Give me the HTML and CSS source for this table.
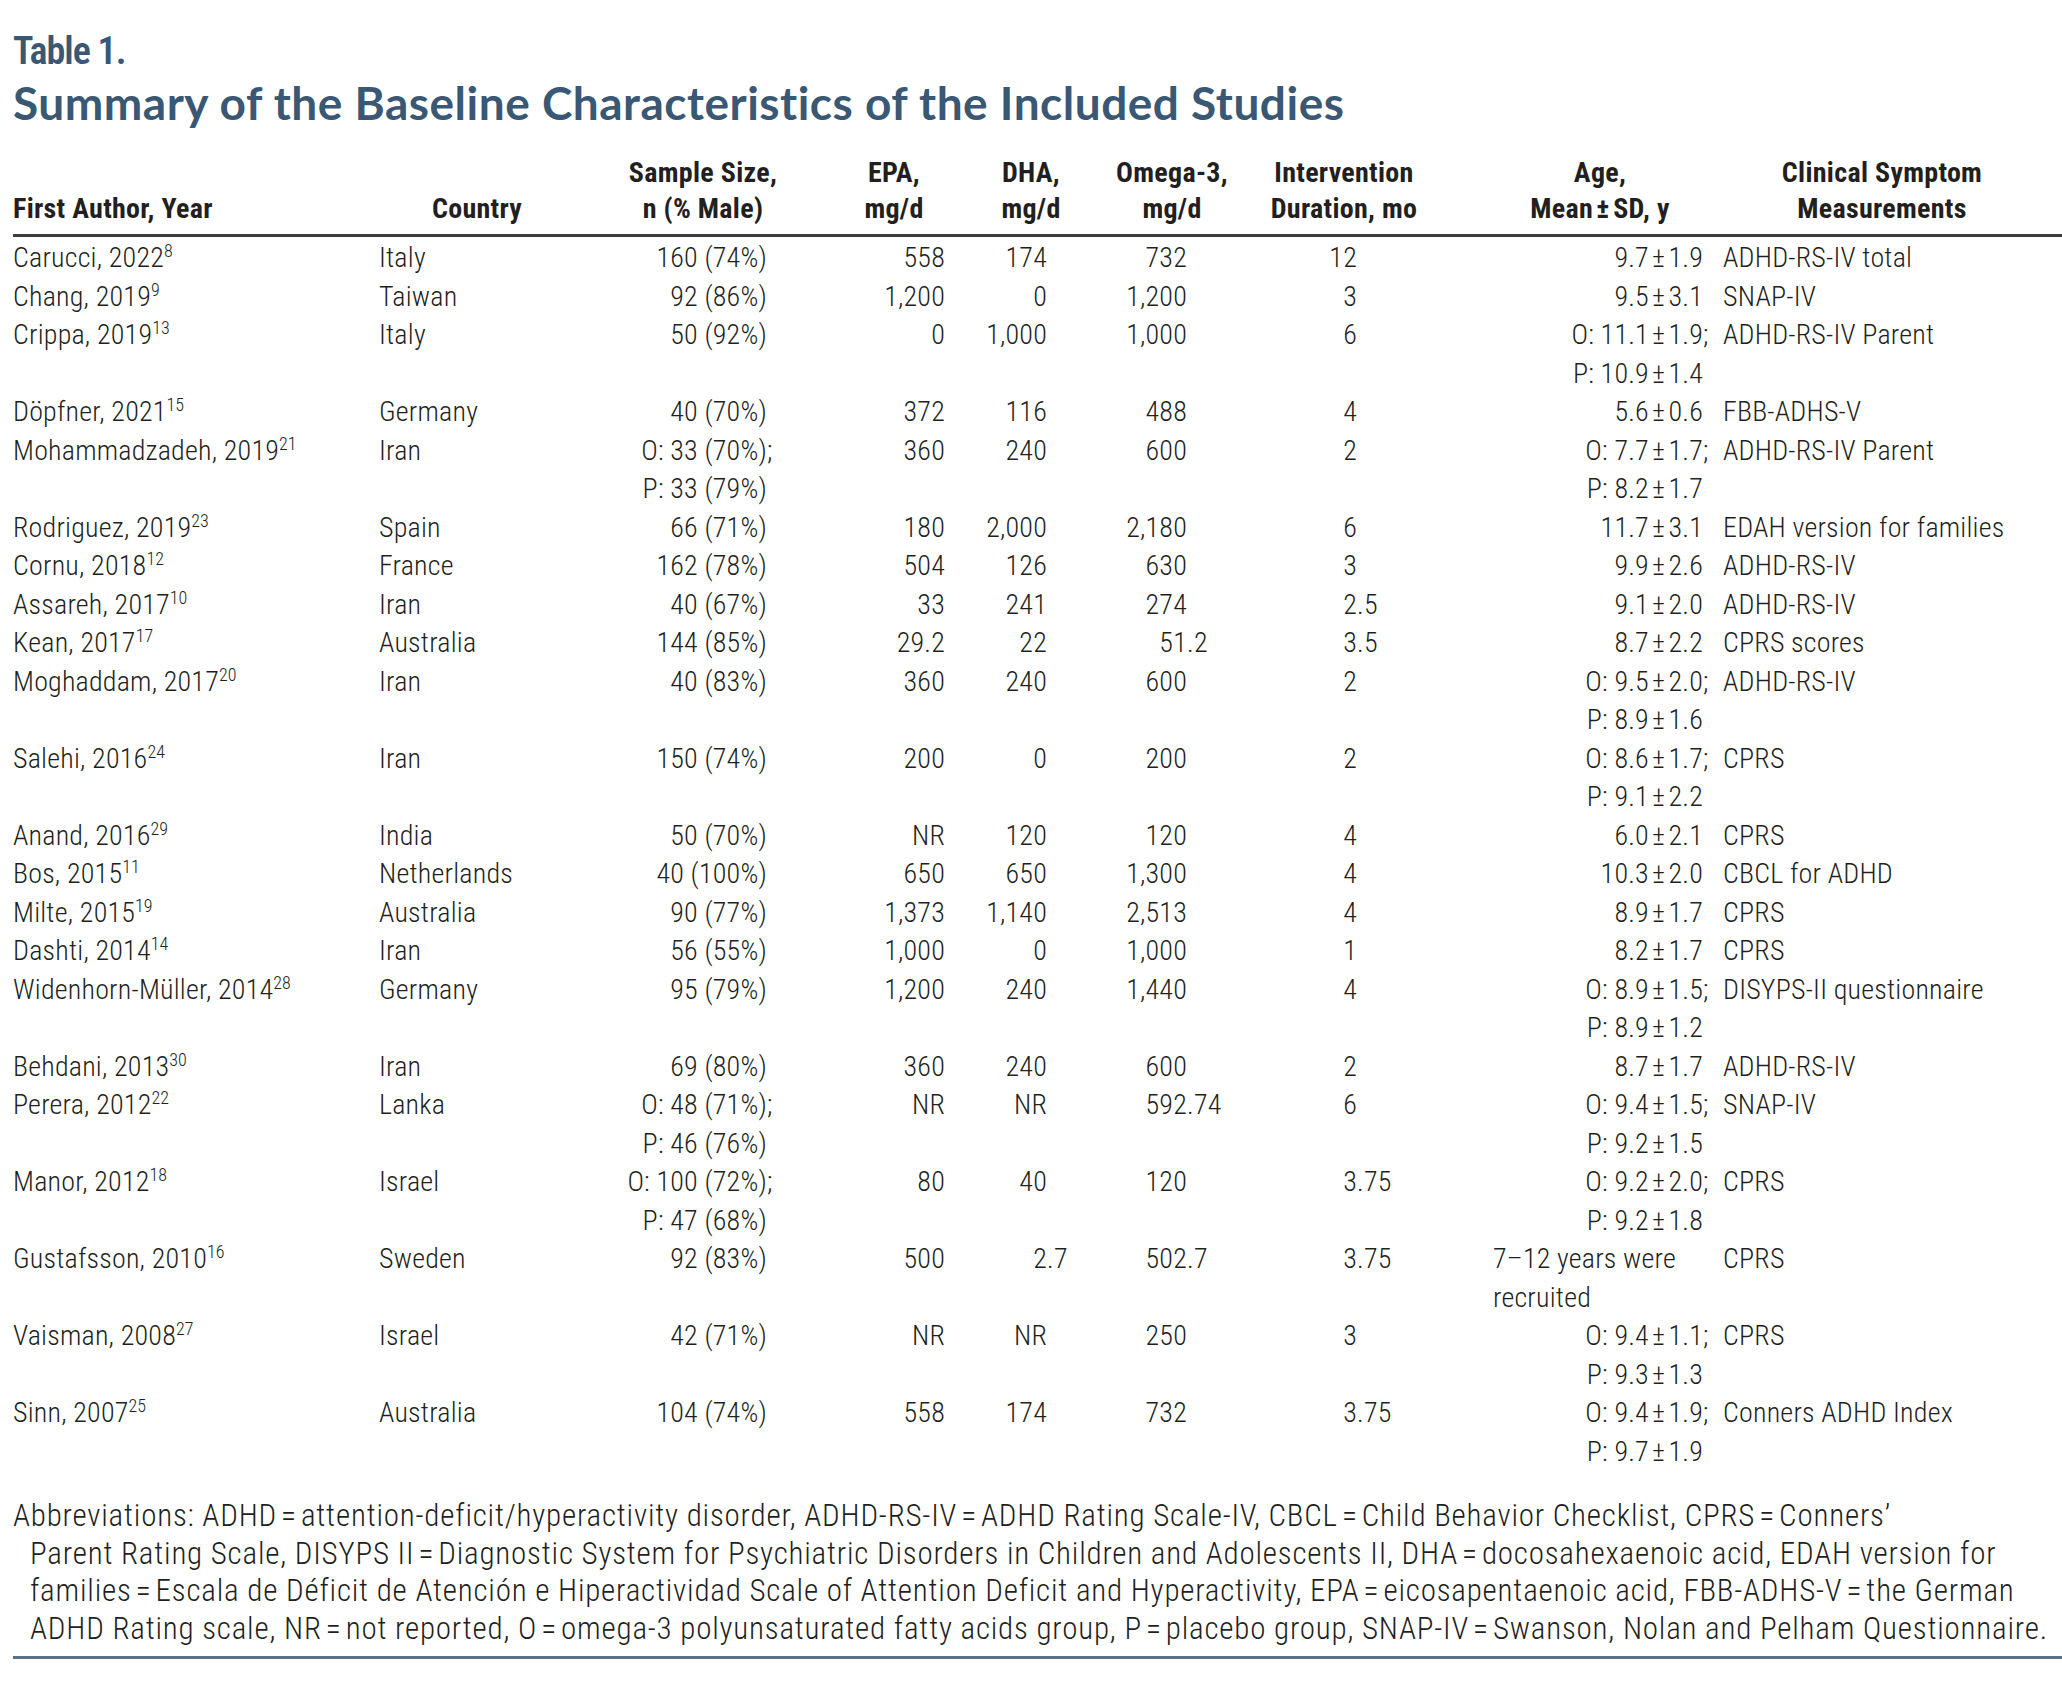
FILE: index.html
```html
<!DOCTYPE html>
<html lang="en">
<head>
<meta charset="utf-8">
<title>Table 1. Summary of the Baseline Characteristics of the Included Studies</title>
<link rel="stylesheet" href="styles.css">
</head>
<body>
<div class="page">
  <div class="label">Table 1.</div>
  <h1 class="title">Summary of the Baseline Characteristics of the Included Studies</h1>
  <table class="tbl">
    <colgroup>
      <col class="w1"><col class="w2"><col class="w3"><col class="w4"><col class="w5"><col class="w6"><col class="w7"><col class="w8"><col class="w9">
    </colgroup>
    <thead>
      <tr>
        <th class="h1">First Author, Year</th>
        <th class="h2">Country</th>
        <th class="h3">Sample Size,<br>n (% Male)</th>
        <th class="h4">EPA,<br>mg/d</th>
        <th class="h5">DHA,<br>mg/d</th>
        <th class="h6">Omega-3,<br>mg/d</th>
        <th class="h7">Intervention<br>Duration, mo</th>
        <th class="h8">Age,<br>Mean&#8202;±&#8202;SD, y</th>
        <th class="h9">Clinical Symptom<br>Measurements</th>
      </tr>
    </thead>
    <tbody>
      <tr><td class="c1">Carucci, 2022<sup>8</sup></td><td class="c2">Italy</td><td class="c3">160 (74%)</td><td class="c4">558</td><td class="c5">174</td><td class="c6">732</td><td class="c7">12</td><td class="c8">9.7&#8202;±&#8202;1.9</td><td class="c9">ADHD-RS-IV total</td></tr>
      <tr><td class="c1">Chang, 2019<sup>9</sup></td><td class="c2">Taiwan</td><td class="c3">92 (86%)</td><td class="c4">1,200</td><td class="c5">0</td><td class="c6">1,200</td><td class="c7">3</td><td class="c8">9.5&#8202;±&#8202;3.1</td><td class="c9">SNAP-IV</td></tr>
      <tr><td class="c1">Crippa, 2019<sup>13</sup></td><td class="c2">Italy</td><td class="c3">50 (92%)</td><td class="c4">0</td><td class="c5">1,000</td><td class="c6">1,000</td><td class="c7">6</td><td class="c8">O: 11.1&#8202;±&#8202;1.9<span class="hang">;</span><br>P: 10.9&#8202;±&#8202;1.4</td><td class="c9">ADHD-RS-IV Parent</td></tr>
      <tr><td class="c1">Döpfner, 2021<sup>15</sup></td><td class="c2">Germany</td><td class="c3">40 (70%)</td><td class="c4">372</td><td class="c5">116</td><td class="c6">488</td><td class="c7">4</td><td class="c8">5.6&#8202;±&#8202;0.6</td><td class="c9">FBB-ADHS-V</td></tr>
      <tr><td class="c1">Mohammadzadeh, 2019<sup>21</sup></td><td class="c2">Iran</td><td class="c3">O: 33 (70%)<span class="hang">;</span><br>P: 33 (79%)</td><td class="c4">360</td><td class="c5">240</td><td class="c6">600</td><td class="c7">2</td><td class="c8">O: 7.7&#8202;±&#8202;1.7<span class="hang">;</span><br>P: 8.2&#8202;±&#8202;1.7</td><td class="c9">ADHD-RS-IV Parent</td></tr>
      <tr><td class="c1">Rodriguez, 2019<sup>23</sup></td><td class="c2">Spain</td><td class="c3">66 (71%)</td><td class="c4">180</td><td class="c5">2,000</td><td class="c6">2,180</td><td class="c7">6</td><td class="c8">11.7&#8202;±&#8202;3.1</td><td class="c9">EDAH version for families</td></tr>
      <tr><td class="c1">Cornu, 2018<sup>12</sup></td><td class="c2">France</td><td class="c3">162 (78%)</td><td class="c4">504</td><td class="c5">126</td><td class="c6">630</td><td class="c7">3</td><td class="c8">9.9&#8202;±&#8202;2.6</td><td class="c9">ADHD-RS-IV</td></tr>
      <tr><td class="c1">Assareh, 2017<sup>10</sup></td><td class="c2">Iran</td><td class="c3">40 (67%)</td><td class="c4">33</td><td class="c5">241</td><td class="c6">274</td><td class="c7">2<span class="hang">.5</span></td><td class="c8">9.1&#8202;±&#8202;2.0</td><td class="c9">ADHD-RS-IV</td></tr>
      <tr><td class="c1">Kean, 2017<sup>17</sup></td><td class="c2">Australia</td><td class="c3">144 (85%)</td><td class="c4">29.2</td><td class="c5">22</td><td class="c6">51<span class="hang">.2</span></td><td class="c7">3<span class="hang">.5</span></td><td class="c8">8.7&#8202;±&#8202;2.2</td><td class="c9">CPRS scores</td></tr>
      <tr><td class="c1">Moghaddam, 2017<sup>20</sup></td><td class="c2">Iran</td><td class="c3">40 (83%)</td><td class="c4">360</td><td class="c5">240</td><td class="c6">600</td><td class="c7">2</td><td class="c8">O: 9.5&#8202;±&#8202;2.0<span class="hang">;</span><br>P: 8.9&#8202;±&#8202;1.6</td><td class="c9">ADHD-RS-IV</td></tr>
      <tr><td class="c1">Salehi, 2016<sup>24</sup></td><td class="c2">Iran</td><td class="c3">150 (74%)</td><td class="c4">200</td><td class="c5">0</td><td class="c6">200</td><td class="c7">2</td><td class="c8">O: 8.6&#8202;±&#8202;1.7<span class="hang">;</span><br>P: 9.1&#8202;±&#8202;2.2</td><td class="c9">CPRS</td></tr>
      <tr><td class="c1">Anand, 2016<sup>29</sup></td><td class="c2">India</td><td class="c3">50 (70%)</td><td class="c4">NR</td><td class="c5">120</td><td class="c6">120</td><td class="c7">4</td><td class="c8">6.0&#8202;±&#8202;2.1</td><td class="c9">CPRS</td></tr>
      <tr><td class="c1">Bos, 2015<sup>11</sup></td><td class="c2">Netherlands</td><td class="c3">40 (100%)</td><td class="c4">650</td><td class="c5">650</td><td class="c6">1,300</td><td class="c7">4</td><td class="c8">10.3&#8202;±&#8202;2.0</td><td class="c9">CBCL for ADHD</td></tr>
      <tr><td class="c1">Milte, 2015<sup>19</sup></td><td class="c2">Australia</td><td class="c3">90 (77%)</td><td class="c4">1,373</td><td class="c5">1,140</td><td class="c6">2,513</td><td class="c7">4</td><td class="c8">8.9&#8202;±&#8202;1.7</td><td class="c9">CPRS</td></tr>
      <tr><td class="c1">Dashti, 2014<sup>14</sup></td><td class="c2">Iran</td><td class="c3">56 (55%)</td><td class="c4">1,000</td><td class="c5">0</td><td class="c6">1,000</td><td class="c7">1</td><td class="c8">8.2&#8202;±&#8202;1.7</td><td class="c9">CPRS</td></tr>
      <tr><td class="c1">Widenhorn-Müller, 2014<sup>28</sup></td><td class="c2">Germany</td><td class="c3">95 (79%)</td><td class="c4">1,200</td><td class="c5">240</td><td class="c6">1,440</td><td class="c7">4</td><td class="c8">O: 8.9&#8202;±&#8202;1.5<span class="hang">;</span><br>P: 8.9&#8202;±&#8202;1.2</td><td class="c9">DISYPS-II questionnaire</td></tr>
      <tr><td class="c1">Behdani, 2013<sup>30</sup></td><td class="c2">Iran</td><td class="c3">69 (80%)</td><td class="c4">360</td><td class="c5">240</td><td class="c6">600</td><td class="c7">2</td><td class="c8">8.7&#8202;±&#8202;1.7</td><td class="c9">ADHD-RS-IV</td></tr>
      <tr><td class="c1">Perera, 2012<sup>22</sup></td><td class="c2">Lanka</td><td class="c3">O: 48 (71%)<span class="hang">;</span><br>P: 46 (76%)</td><td class="c4">NR</td><td class="c5">NR</td><td class="c6">592<span class="hang">.74</span></td><td class="c7">6</td><td class="c8">O: 9.4&#8202;±&#8202;1.5<span class="hang">;</span><br>P: 9.2&#8202;±&#8202;1.5</td><td class="c9">SNAP-IV</td></tr>
      <tr><td class="c1">Manor, 2012<sup>18</sup></td><td class="c2">Israel</td><td class="c3">O: 100 (72%)<span class="hang">;</span><br>P: 47 (68%)</td><td class="c4">80</td><td class="c5">40</td><td class="c6">120</td><td class="c7">3<span class="hang">.75</span></td><td class="c8">O: 9.2&#8202;±&#8202;2.0<span class="hang">;</span><br>P: 9.2&#8202;±&#8202;1.8</td><td class="c9">CPRS</td></tr>
      <tr><td class="c1">Gustafsson, 2010<sup>16</sup></td><td class="c2">Sweden</td><td class="c3">92 (83%)</td><td class="c4">500</td><td class="c5">2<span class="hang">.7</span></td><td class="c6">502<span class="hang">.7</span></td><td class="c7">3<span class="hang">.75</span></td><td class="c8 left">7–12 years were<br>recruited</td><td class="c9">CPRS</td></tr>
      <tr><td class="c1">Vaisman, 2008<sup>27</sup></td><td class="c2">Israel</td><td class="c3">42 (71%)</td><td class="c4">NR</td><td class="c5">NR</td><td class="c6">250</td><td class="c7">3</td><td class="c8">O: 9.4&#8202;±&#8202;1.1<span class="hang">;</span><br>P: 9.3&#8202;±&#8202;1.3</td><td class="c9">CPRS</td></tr>
      <tr><td class="c1">Sinn, 2007<sup>25</sup></td><td class="c2">Australia</td><td class="c3">104 (74%)</td><td class="c4">558</td><td class="c5">174</td><td class="c6">732</td><td class="c7">3<span class="hang">.75</span></td><td class="c8">O: 9.4&#8202;±&#8202;1.9<span class="hang">;</span><br>P: 9.7&#8202;±&#8202;1.9</td><td class="c9">Conners ADHD Index</td></tr>
    </tbody>
  </table>
  <p class="notes">
    <span class="nl">Abbreviations: ADHD&#8202;=&#8202;attention-deficit/hyperactivity disorder, ADHD-RS-IV&#8202;=&#8202;ADHD Rating Scale-IV, CBCL&#8202;=&#8202;Child Behavior Checklist, CPRS&#8202;=&#8202;Conners’</span>
    <span class="nl ind">Parent Rating Scale, DISYPS II&#8202;=&#8202;Diagnostic System for Psychiatric Disorders in Children and Adolescents II, DHA&#8202;=&#8202;docosahexaenoic acid, EDAH version for</span>
    <span class="nl ind">families&#8202;=&#8202;Escala de Déficit de Atención e Hiperactividad Scale of Attention Deficit and Hyperactivity, EPA&#8202;=&#8202;eicosapentaenoic acid, FBB-ADHS-V&#8202;=&#8202;the German</span>
    <span class="nl ind">ADHD Rating scale, NR&#8202;=&#8202;not reported, O&#8202;=&#8202;omega-3 polyunsaturated fatty acids group, P&#8202;=&#8202;placebo group, SNAP-IV&#8202;=&#8202;Swanson, Nolan and Pelham Questionnaire.</span>
  </p>
</div>
</body>
</html>
```
FILE: styles.css
```css
html, body {
  margin: 0;
  padding: 0;
  background: #ffffff;
}

body {
  font-family: "Roboto Condensed", Roboto, "Liberation Sans", sans-serif;
  font-stretch: condensed;
  font-weight: 300;
  color: #231f20;
}

.page {
  width: 2049px;
  padding: 31px 0 0 13px;
}

.label {
  font-family: "Roboto Condensed", Roboto, sans-serif;
  font-weight: 600;
  font-size: 38px;
  line-height: 40px;
  color: #3a5873;
  letter-spacing: -1px;
}

.title {
  margin: 7px 0 0;
  font-family: Lato, "Open Sans", sans-serif;
  font-stretch: normal;
  font-weight: 700;
  font-size: 46px;
  line-height: 50px;
  letter-spacing: 0.5px;
  color: #3a5873;
}

.tbl {
  margin-top: 27px;
  width: 2049px;
  table-layout: fixed;
  border-collapse: collapse;
  font-size: 28px;
  letter-spacing: 0.2px;
}

.w1 { width: 366px; }
.w2 { width: 211px; }
.w3 { width: 200px; }
.w4 { width: 170px; }
.w5 { width: 150px; }
.w6 { width: 130px; }
.w7 { width: 210px; }
.w8 { width: 265px; }
.w9 { width: 347px; }

.tbl th {
  font-weight: 700;
  line-height: 35.5px;
  letter-spacing: 0.3px;
  vertical-align: bottom;
  text-align: center;
  padding: 0 0 8px;
  border-bottom: 3px solid #3d3d3d;
  white-space: nowrap;
  color: #231f20;
}

.tbl th.h1 { text-align: left; }
.h2 { padding-right: 15px !important; }
.h3 { padding-left: 26px !important; }
.h4 { padding-left: 38px !important; }
.h5 { padding-right: 8px !important; }
.h6 { padding-right: 6px !important; }
.h7 { padding-right: 2px !important; }
.h8 { padding-left: 35px !important; }
.h9 { padding-right: 13px !important; }

.tbl td {
  padding: 0;
  line-height: 38.5px;
  vertical-align: top;
  white-space: nowrap;
  text-align: right;
}

.tbl tbody tr:first-child td { padding-top: 2px; }

.tbl td.c1, .tbl td.c2, .tbl td.c9 { text-align: left; }
.c3 { padding-right: 23px !important; }
.c4 { padding-right: 15px !important; }
.c5 { padding-right: 63px !important; }
.c6 { padding-right: 53px !important; }
.c7 { padding-right: 93px !important; }
.c8 { padding-right: 12px !important; }
.c9 { padding-left: 8px !important; }
.tbl td.left { text-align: left; padding-left: 43px !important; padding-right: 0 !important; }

.hang {
  display: inline-block;
  width: 0;
  white-space: nowrap;
  text-align: left;
}

sup {
  font-size: 18px;
  line-height: 0;
  vertical-align: 10px;
  letter-spacing: 0;
}

.notes {
  margin: 26px 0 0;
  padding-bottom: 8px;
  border-bottom: 3px solid #587189;
  font-size: 31px;
  line-height: 37.7px;
  letter-spacing: 0.8px;
}

.nl {
  display: block;
  white-space: nowrap;
}

.ind {
  padding-left: 17px;
}
```
